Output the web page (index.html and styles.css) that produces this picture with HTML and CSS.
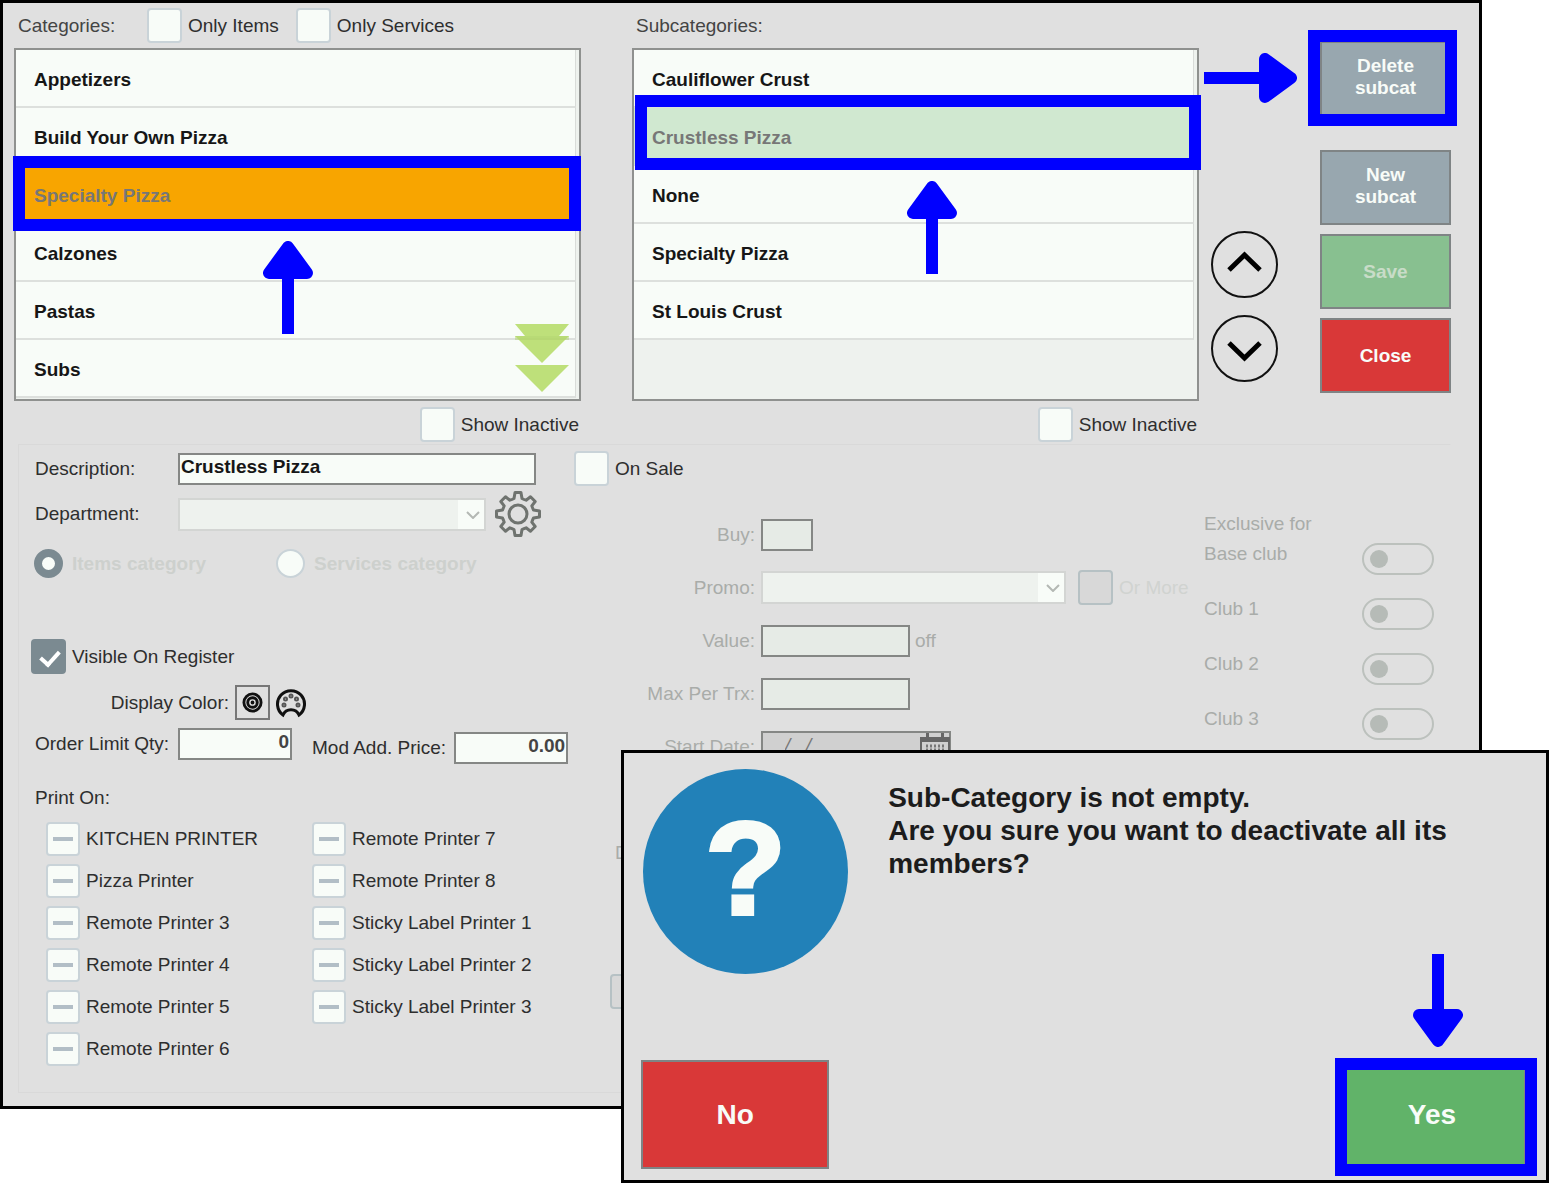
FILE: index.html
```html
<!DOCTYPE html>
<html lang="en">
<head>
    <meta charset="UTF-8">
    <meta name="viewport" content="width=device-width, initial-scale=1.0">
    <title>Categories and Subcategories</title>
    <link rel="stylesheet" href="styles.css">
</head>
<body>
    <svg class="sprite" aria-hidden="true">
        <symbol id="arrow-up" viewBox="0 0 50 93">
            <path d="M19 30h12v63H19z"/>
            <path d="M25 6L6 32h38z" stroke="#0000ff" stroke-width="12" stroke-linejoin="round"/>
        </symbol>
    </svg>

    <div class="page">
        <main class="window">
            <div class="top">
                <section class="panel">
                    <div class="panel-head">
                        <span class="panel-title">Categories:</span>
                        <label class="check"><input type="checkbox"> Only Items</label>
                        <label class="check"><input type="checkbox"> Only Services</label>
                    </div>
                    <div class="list">
                        <ul>
                            <li><button type="button">Appetizers</button></li>
                            <li><button type="button">Build Your Own Pizza</button></li>
                            <li class="selected-category"><button type="button">Specialty Pizza</button></li>
                            <li><button type="button">Calzones</button></li>
                            <li><button type="button">Pastas</button></li>
                            <li><button type="button">Subs</button></li>
                        </ul>
                        <svg class="more" viewBox="0 0 54 68" aria-hidden="true">
                            <path d="M0 0h54L44 12H10z"/>
                            <path d="M0 12h54L27 39z"/>
                            <path d="M0 41h54L27 68z"/>
                            <path class="more-line" d="M0 13h54M0 15h54"/>
                        </svg>
                        <svg class="arrow arrow-category" viewBox="0 0 50 93" aria-hidden="true"><use href="#arrow-up"/></svg>
                    </div>
                    <div class="panel-foot">
                        <label class="check"><input type="checkbox"> Show Inactive</label>
                    </div>
                </section>

                <section class="panel">
                    <div class="panel-head">
                        <span class="panel-title">Subcategories:</span>
                    </div>
                    <div class="list">
                        <ul>
                            <li><button type="button">Cauliflower Crust</button></li>
                            <li class="selected-subcategory"><button type="button">Crustless Pizza</button></li>
                            <li><button type="button">None</button></li>
                            <li><button type="button">Specialty Pizza</button></li>
                            <li><button type="button">St Louis Crust</button></li>
                        </ul>
                        <svg class="arrow arrow-subcategory" viewBox="0 0 50 93" aria-hidden="true"><use href="#arrow-up"/></svg>
                    </div>
                    <div class="panel-foot">
                        <label class="check"><input type="checkbox"> Show Inactive</label>
                    </div>
                </section>

                <div class="movers">
                    <button type="button" aria-label="Move up">
                        <svg viewBox="0 0 67 67"><path d="M18 39l15.500-15 15.500 15"/></svg>
                    </button>
                    <button type="button" aria-label="Move down">
                        <svg viewBox="0 0 67 67"><path d="M18 28l15.500 15L49 28"/></svg>
                    </button>
                </div>

                <div class="actions">
                    <div class="delete-wrap">
                        <button type="button" class="btn btn-gray">Delete<br>subcat</button>
                        <svg class="arrow arrow-delete" viewBox="0 0 93 50" aria-hidden="true">
                            <use href="#arrow-up" width="50" height="93" transform="translate(93 0) rotate(90)"/>
                        </svg>
                    </div>
                    <button type="button" class="btn btn-gray">New<br>subcat</button>
                    <button type="button" class="btn btn-save" disabled>Save</button>
                    <button type="button" class="btn btn-red">Close</button>
                </div>
            </div>

            <form class="details">
                <div class="row description-row">
                    <label class="field-label" for="description">Description:</label>
                    <input class="text-input description" type="text" id="description" value="Crustless Pizza">
                    <label class="check"><input type="checkbox"> On Sale</label>
                </div>

                <div class="columns">
                    <div class="general">
                        <div class="row department-row">
                            <label class="field-label" for="department">Department:</label>
                            <div class="select department">
                                <select id="department" disabled><option></option></select>
                                <svg viewBox="0 0 14 8" aria-hidden="true"><path d="M1 1l6 6 6-6"/></svg>
                            </div>
                            <button type="button" class="icon-btn gear" aria-label="Department settings">
                                <svg viewBox="-23 -23 46 46">
                                    <path d="M-4-15.500Q-3-21-3-21.500H3Q3-21 4-15.500Q6-14.500 8.100-13.800L12.500-17.200L17.200-12.500L13.800-8.100Q14.500-6 15.500-4L21.500-3V3L15.500 4Q14.500 6 13.800 8.100L17.200 12.500L12.500 17.200L8.100 13.800Q6 14.500 4 15.500L3 21.500H-3L-4 15.500Q-6 14.500-8.100 13.800L-12.500 17.200L-17.200 12.500L-13.800 8.100Q-14.500 6-15.500 4L-21.500 3V-3L-15.500-4Q-14.500-6-13.800-8.100L-17.200-12.500L-12.500-17.200L-8.100-13.800Q-6-14.500-4-15.500z"/>
                                    <circle r="9"/>
                                </svg>
                            </button>
                        </div>

                        <div class="row radio-row">
                            <label><input type="radio" name="kind" checked disabled> Items category</label>
                            <label><input type="radio" name="kind" disabled> Services category</label>
                        </div>

                        <div class="row visible-row">
                            <label class="check"><input type="checkbox" checked> Visible On Register</label>
                        </div>

                        <div class="row color-row">
                            <span class="color-label">Display Color:</span>
                            <button type="button" class="icon-btn swatch" aria-label="Pick color">
                                <svg viewBox="0 0 22 22">
                                    <circle cx="11" cy="11" r="9" stroke-width="3"/>
                                    <circle cx="11" cy="11" r="5" stroke-width="3"/>
                                    <circle cx="11" cy="11" r="1" stroke-width="2"/>
                                </svg>
                            </button>
                            <button type="button" class="icon-btn palette" aria-label="Palette">
                                <svg viewBox="0 0 30 30">
                                    <path d="M7 27A13.500 13.500 0 1 1 23 27C20 20 10 20 7 27z" stroke-width="3"/>
                                    <g stroke-width="2">
                                        <circle cx="8" cy="17" r="1.500"/>
                                        <circle cx="9.500" cy="11" r="1.500"/>
                                        <circle cx="15" cy="8" r="1.500"/>
                                        <circle cx="20.500" cy="11" r="1.500"/>
                                        <circle cx="22" cy="17" r="1.500"/>
                                    </g>
                                </svg>
                            </button>
                        </div>

                        <div class="limits">
                            <div class="row">
                                <label class="field-label" for="limit">Order Limit Qty:</label>
                                <input class="text-input number" type="text" id="limit" value="0">
                            </div>
                            <div class="row price-row">
                                <label for="price">Mod Add. Price:</label>
                                <input class="text-input number" type="text" id="price" value="0.00">
                            </div>
                        </div>

                        <div class="print-title">Print On:</div>
                        <div class="printers">
                            <label class="check"><input type="checkbox" class="mixed"> KITCHEN PRINTER</label>
                            <label class="check"><input type="checkbox" class="mixed"> Pizza Printer</label>
                            <label class="check"><input type="checkbox" class="mixed"> Remote Printer 3</label>
                            <label class="check"><input type="checkbox" class="mixed"> Remote Printer 4</label>
                            <label class="check"><input type="checkbox" class="mixed"> Remote Printer 5</label>
                            <label class="check"><input type="checkbox" class="mixed"> Remote Printer 6</label>
                            <label class="check"><input type="checkbox" class="mixed"> Remote Printer 7</label>
                            <label class="check"><input type="checkbox" class="mixed"> Remote Printer 8</label>
                            <label class="check"><input type="checkbox" class="mixed"> Sticky Label Printer 1</label>
                            <label class="check"><input type="checkbox" class="mixed"> Sticky Label Printer 2</label>
                            <label class="check"><input type="checkbox" class="mixed"> Sticky Label Printer 3</label>
                        </div>
                    </div>

                    <div class="sale">
                        <div class="sale-grid">
                            <label for="buy">Buy:</label>
                            <div class="row"><input class="text-input buy" type="text" id="buy" disabled></div>

                            <label for="promo">Promo:</label>
                            <div class="row">
                                <div class="select promo">
                                    <select id="promo" disabled><option></option></select>
                                    <svg viewBox="0 0 14 8" aria-hidden="true"><path d="M1 1l6 6 6-6"/></svg>
                                </div>
                                <label class="check or-more"><input type="checkbox" disabled> Or More</label>
                            </div>

                            <label for="value">Value:</label>
                            <div class="row"><input class="text-input amount" type="text" id="value" disabled><span class="suffix">off</span></div>

                            <label for="max">Max Per Trx:</label>
                            <div class="row"><input class="text-input amount" type="text" id="max" disabled></div>

                            <label for="start">Start Date:</label>
                            <div class="row date">
                                <input class="text-input" type="text" id="start" value="/   /" disabled>
                                <svg viewBox="0 0 30 28" aria-hidden="true">
                                    <path d="M1 5h28v22H1z" fill="none" stroke="#666" stroke-width="2"/>
                                    <path d="M1 4h28v5H1zM6 0h3v5H6zM21 0h3v5h-3z" fill="#666"/>
                                    <path d="M6 13h19M6 17h19M6 21h19" stroke="#777" stroke-width="3" stroke-dasharray="2 2"/>
                                </svg>
                            </div>
                        </div>
                        <div class="days">D</div>
                        <label class="all-days">A<input type="checkbox" disabled></label>
                    </div>

                    <div class="clubs">
                        <div class="clubs-title">Exclusive for</div>
                        <label>Base club <input type="checkbox" class="toggle" disabled></label>
                        <label>Club 1 <input type="checkbox" class="toggle" disabled></label>
                        <label>Club 2 <input type="checkbox" class="toggle" disabled></label>
                        <label>Club 3 <input type="checkbox" class="toggle" disabled></label>
                    </div>
                </div>
            </form>
        </main>

        <div class="dialog" role="dialog" aria-labelledby="message">
            <div class="dialog-body">
                <div class="dialog-icon">?</div>
                <p id="message">Sub-Category is not empty.<br>Are you sure you want to deactivate all its members?</p>
            </div>
            <div class="dialog-buttons">
                <button type="button" class="btn btn-red">No</button>
                <div class="yes-wrap">
                    <button type="button" class="btn btn-green">Yes</button>
                    <svg class="arrow arrow-yes" viewBox="0 0 50 93" aria-hidden="true">
                        <use href="#arrow-up" width="50" height="93" transform="translate(50 93) rotate(180)"/>
                    </svg>
                </div>
            </div>
        </div>
    </div>
</body>
</html>
```
FILE: styles.css
```css
* {
    box-sizing: border-box;
}

body {
    margin: 0;
    background-color: #fff;
    color: #2e2e2e;
    font-family: "Liberation Sans", Arial, sans-serif;
    font-size: 19px;
    line-height: 22px;
}

button,
input,
select {
    margin: 0;
    font-family: inherit;
    font-size: inherit;
    line-height: inherit;
}

.sprite {
    position: absolute;
    width: 0;
    height: 0;
}

.page {
    position: relative;
    padding-bottom: 75px;
}

.window {
    margin-right: 71px;
    padding-bottom: 13px;
    border: 3px solid #000;
    background-color: #e0e0e0;
}

/* Lists at the top */
.top {
    display: flex;
    padding: 0 28px 0 11px;
}

.panel {
    flex: 1;
}

.panel + .panel {
    margin-left: 51px;
}

.panel-head {
    display: flex;
    align-items: center;
    gap: 17px;
    height: 45px;
    padding-left: 4px;
}

.panel-title {
    min-width: 112px;
    color: #444;
}

.panel-foot {
    display: flex;
    align-items: center;
    justify-content: flex-end;
    height: 43px;
    padding: 4px 2px 0 0;
}

.list {
    position: relative;
    height: 353px;
    border: 2px solid #8f918f;
    background-color: #eef2ee;
}

.list ul {
    margin: 0 3px 0 0;
    padding: 0;
    list-style: none;
}

.list li {
    position: relative;
    height: 58px;
    border-right: 1px solid #d9dcd9;
    border-bottom: 2px solid #dde0dd;
    background-color: #f8fcf8;
}

.list button {
    width: 100%;
    height: 100%;
    padding: 4px 18px 0;
    border: none;
    background: none;
    color: #161616;
    font-weight: bold;
    text-align: left;
}

.list .selected-category {
    z-index: 1;
    background-color: #f8a500;
}

.list .selected-subcategory {
    z-index: 1;
    background-color: #d0e8d0;
}

.list .selected-category button,
.list .selected-subcategory button {
    color: #777;
}

/* Blue marks */
.selected-category::after,
.selected-subcategory::after,
.delete-wrap::after,
.yes-wrap::after {
    content: "";
    position: absolute;
    border: 12px solid #0000ff;
    pointer-events: none;
}

.selected-category::after {
    inset: -10px -6px -9px -3px;
}

.selected-subcategory::after {
    inset: -13px -8px -6px 1px;
}

.delete-wrap::after {
    inset: -11px -6px -10px -12px;
}

.yes-wrap::after {
    inset: -2px -11px -7px -3px;
}

.arrow {
    position: absolute;
    z-index: 1;
    width: 50px;
    height: 93px;
    fill: #0000ff;
}

.arrow-category {
    top: 191px;
    left: 247px;
}

.arrow-subcategory {
    top: 131px;
    left: 273px;
}

.arrow-delete {
    top: 12px;
    right: 154px;
    width: 93px;
    height: 50px;
}

.arrow-yes {
    top: -106px;
    left: 75px;
}

.more {
    position: absolute;
    right: 10px;
    bottom: 7px;
    width: 54px;
    height: 68px;
    fill: #b8dd6d;
    opacity: 0.9;
}

.more-line {
    stroke: #add267;
}

/* Buttons */
.movers {
    display: flex;
    flex-direction: column;
    gap: 17px;
    padding-top: 228px;
    margin-left: 12px;
}

.movers button {
    width: 67px;
    height: 67px;
    padding: 0;
    border: 2px solid #111;
    border-radius: 50%;
    background: none;
}

.movers svg {
    display: block;
    margin: -2px;
    width: 67px;
    fill: none;
    stroke: #000;
    stroke-width: 5;
}

.actions {
    display: flex;
    flex-direction: column;
    gap: 9px;
    width: 131px;
    padding-top: 38px;
    margin-left: 42px;
}

.delete-wrap {
    position: relative;
    margin-bottom: 25px;
}

.btn {
    display: block;
    width: 100%;
    height: 75px;
    padding: 0;
    border: 2px solid #7f8485;
    color: #f8fcf8;
    font-weight: bold;
}

.btn-gray {
    padding-bottom: 3px;
    background-color: #98a7af;
}

.btn-save {
    background-color: #88c090;
    color: #c8dcc8;
}

.btn-red {
    background-color: #d93838;
}

.btn-green {
    background-color: #61b369;
}

/* Check boxes */
.check {
    display: inline-flex;
    align-items: center;
    gap: 6px;
    white-space: nowrap;
}

.check input,
.all-days input {
    flex: none;
    appearance: none;
    width: 35px;
    height: 35px;
    border: 2px solid #c9d3d8;
    border-radius: 4px;
    background-color: #f8fcf8;
}

.check input:checked {
    border-color: #7b8a91;
    background-color: #7b8a91;
}

.check input:checked::before {
    content: "";
    display: block;
    width: 8px;
    height: 15px;
    margin: 6px 11px;
    border: solid #fff;
    border-width: 0 4px 4px 0;
    transform: rotate(42deg);
}

.check input.mixed {
    width: 34px;
    height: 34px;
    background: linear-gradient(#b2bec6, #b2bec6) center / 20px 4px no-repeat #f8fcf8;
}

.check input:disabled,
.all-days input {
    border-color: #b6c1c4;
    background-color: #d8d8d8;
}

/* Details form */
.details {
    margin: 0 28px 0 15px;
    padding: 6px 0 26px 12px;
    border: 1px solid #d9d9d9;
    border-right-color: transparent;
}

.row {
    display: flex;
    align-items: center;
}

.description-row {
    height: 35px;
}

.field-label {
    width: 147px;
    padding-left: 4px;
    white-space: nowrap;
}

.text-input {
    height: 32px;
    padding: 0 1px 4px;
    border: 2px solid #858785;
    border-radius: 0;
    background-color: #f8fcf8;
    color: #161616;
    font-weight: bold;
}

.text-input:disabled {
    background-color: #e6ebe6;
}

.description {
    width: 358px;
    margin-right: 38px;
}

.number {
    width: 114px;
    color: #444;
    text-align: right;
}

.select {
    position: relative;
    height: 33px;
}

.select select {
    appearance: none;
    width: 100%;
    height: 100%;
    border: 2px solid #d3d5d3;
    border-radius: 0;
    background: linear-gradient(#f8fcf8, #f8fcf8) right / 26px 100% no-repeat #eef2ee;
    opacity: 1;
}

.select svg {
    position: absolute;
    top: 13px;
    right: 6px;
    width: 14px;
    height: 8px;
    fill: none;
    stroke: #b4b8b4;
    stroke-width: 2;
}

.columns {
    display: flex;
}

.general {
    width: 559px;
}

.department-row {
    height: 46px;
    margin-top: 5px;
}

.department {
    width: 308px;
}

.icon-btn {
    padding: 0;
    border: none;
    background: none;
}

.icon-btn svg {
    display: block;
    width: 100%;
    fill: none;
    stroke: #111;
}

.gear {
    width: 46px;
    margin-left: 9px;
}

.gear svg {
    stroke: #6f736f;
    stroke-width: 3;
    stroke-linejoin: round;
}

.radio-row {
    height: 29px;
    margin: 12px 0 61px 3px;
    color: #cdd0cd;
    font-weight: bold;
}

.radio-row label {
    display: flex;
    align-items: center;
    gap: 9px;
    width: 242px;
    white-space: nowrap;
}

.radio-row input {
    appearance: none;
    width: 29px;
    height: 29px;
    border: 2px solid #c9d3d8;
    border-radius: 50%;
    background-color: #f8fcf8;
}

.radio-row input:checked {
    border: 8px solid #7b8a91;
}

.color-row {
    gap: 6px;
    margin: 11px 0 8px;
}

.color-label {
    width: 198px;
    text-align: right;
}

.swatch {
    width: 35px;
    height: 35px;
    padding: 5px;
    border: 2px solid #777;
}

.palette {
    width: 30px;
}

.palette circle {
    stroke: #555;
}

.limits {
    display: flex;
    gap: 20px;
    height: 36px;
    align-items: flex-start;
}

.price-row {
    gap: 8px;
    align-self: flex-end;
    white-space: nowrap;
}

.print-title {
    margin: 23px 0 13px 4px;
}

.printers {
    display: grid;
    grid-template-rows: repeat(6, 34px);
    grid-template-columns: 266px auto;
    grid-auto-flow: column;
    gap: 8px 0;
    padding-left: 15px;
}

/* Sale settings */
.sale {
    flex: 1;
    padding-top: 32px;
    color: #a9aca9;
}

.sale-grid {
    display: grid;
    grid-template-columns: 165px 1fr;
    grid-auto-rows: 33px;
    align-items: center;
    gap: 20px 6px;
}

.sale-grid > label {
    text-align: right;
}

.buy {
    width: 52px;
}

.promo {
    width: 305px;
}

.or-more {
    margin-left: 12px;
    color: #d0d3d0;
}

.amount {
    width: 149px;
}

.suffix {
    margin-left: 5px;
}

.date {
    position: relative;
    width: 190px;
}

.date .text-input {
    width: 100%;
    padding-left: 22px;
    background-color: #d0d0d0;
    color: #777;
    font-style: italic;
    font-weight: normal;
    white-space: pre;
}

.date svg {
    position: absolute;
    top: 2px;
    right: 1px;
    width: 30px;
}

.days {
    margin: 79px 0 0 25px;
}

.all-days {
    display: flex;
    flex-direction: column;
    width: 35px;
    margin: 88px 0 0 20px;
    color: #d0d3d0;
    text-align: center;
}

/* Club switches */
.clubs {
    width: 246px;
    padding: 27px 16px 0 0;
    color: #a9aca9;
}

.clubs label {
    display: flex;
    justify-content: space-between;
    height: 32px;
    margin-bottom: 23px;
}

.clubs-title {
    margin-bottom: 8px;
}

.toggle {
    appearance: none;
    width: 72px;
    height: 32px;
    padding: 5px 6px;
    border: 2px solid #bcc1bd;
    border-radius: 16px;
}

.toggle::before {
    content: "";
    display: block;
    width: 18px;
    height: 18px;
    border-radius: 50%;
    background-color: #b6bbb7;
}

/* Confirmation dialog */
.dialog {
    position: absolute;
    z-index: 2;
    top: 750px;
    right: 4px;
    left: 40%;
    padding: 16px 20px 11px 17px;
    border: 3px solid #000;
    background-color: #e0e0e0;
}

.dialog-body {
    display: flex;
    gap: 40px;
    margin-left: 2px;
}

.dialog-icon {
    flex: none;
    width: 205px;
    height: 205px;
    border-radius: 50%;
    background-color: #2281b8;
    color: #f8fcf8;
    font-size: 132px;
    font-weight: bold;
    line-height: 200px;
    text-align: center;
    -webkit-text-stroke: 4px #f8fcf8;
}

.dialog p {
    margin: 12px 0 0;
    color: #1c1c1c;
    font-size: 28px;
    font-weight: bold;
    line-height: 33px;
}

.dialog-buttons {
    display: flex;
    justify-content: space-between;
    margin-top: 86px;
}

.dialog .btn {
    width: 188px;
    height: 109px;
    font-size: 28px;
}

.yes-wrap {
    position: relative;
}
```
